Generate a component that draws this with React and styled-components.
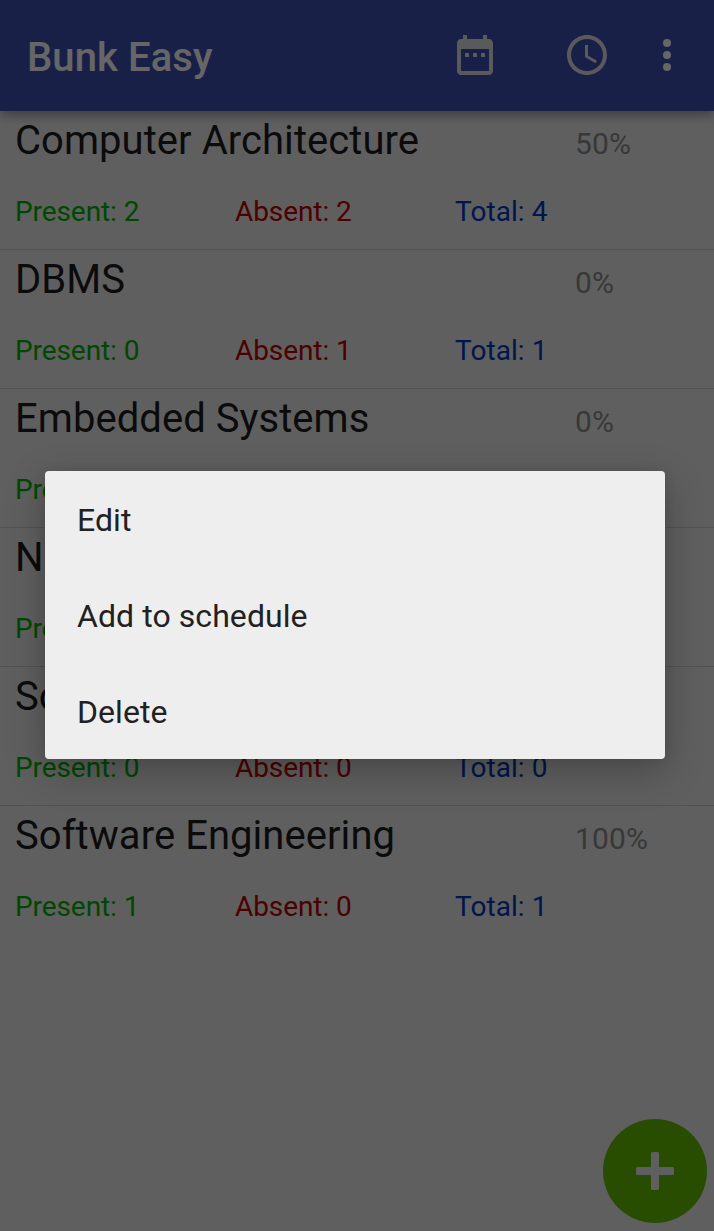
import React from "react";
import styled, { createGlobalStyle } from "styled-components";

const GlobalStyle = createGlobalStyle`
  * { box-sizing: border-box; }
  body {
    margin: 0;
    background: #eeeeee;
    font-family: Roboto, "Liberation Sans", sans-serif;
    overflow: hidden;
  }
`;

const Screen = styled.div`
  position: relative;
  display: flex;
  flex-direction: column;
  width: 714px;
  height: 1231px;
  overflow: hidden;
  background: #eeeeee;
`;

const AppBar = styled.header`
  display: flex;
  align-items: center;
  flex: none;
  height: 111px;
  padding: 0 23px 0 27px;
  background: #3f51b5;
  box-shadow: 0 5px 10px rgba(0, 0, 0, 0.32);
  z-index: 1;
`;

const AppTitle = styled.h1`
  flex: 1;
  margin: 0;
  padding-top: 5px;
  font-size: 40px;
  line-height: 48px;
  font-weight: 500;
  letter-spacing: 0.08px;
  color: #ffffff;
`;

const IconButton = styled.button`
  display: flex;
  flex: none;
  margin: 0 0 1px ${(p) => p.$gap || 0}px;
  padding: 0;
  border: 0;
  background: none;
  color: ${(p) => (p.$strong ? "#ffffff" : "#e0e0e8")};
`;

const SubjectList = styled.ul`
  margin: 0;
  padding: 0;
  list-style: none;
`;

const SubjectRow = styled.li`
  display: flex;
  flex-direction: column;
  height: 139px;
  padding: 0 15px;
  border-bottom: ${(p) => (p.$last ? 0 : 1)}px solid #cdcdcd;
`;

const SubjectHeading = styled.div`
  display: flex;
  align-items: baseline;
  padding-top: 6px;
`;

const SubjectName = styled.span`
  width: 560px;
  font-size: 40px;
  line-height: 48px;
  letter-spacing: 0.05px;
  color: #1d1d1d;
`;

const Percent = styled.span`
  font-size: 30px;
  line-height: 36px;
  letter-spacing: 0.15px;
  color: #8c8c8c;
`;

const Stats = styled.div`
  display: grid;
  grid-template-columns: 220px 220px 220px;
  margin-top: 30px;
`;

const Stat = styled.span`
  font-size: 28px;
  line-height: 33px;
  letter-spacing: ${(p) => p.$tracking || 0}px;
  color: ${(p) => p.$color};
`;

const AddButton = styled.button`
  position: absolute;
  right: 7px;
  bottom: 8px;
  display: flex;
  align-items: center;
  justify-content: center;
  width: 104px;
  height: 104px;
  padding: 0;
  border: 0;
  border-radius: 50%;
  background: #68c000;
  color: #eeeeee;
`;

const Scrim = styled.div`
  position: absolute;
  inset: 0;
  z-index: 2;
  background: rgba(0, 0, 0, 0.6);
`;

const Menu = styled.div`
  position: absolute;
  left: 45px;
  top: 471px;
  z-index: 3;
  width: 620px;
  border-radius: 4px;
  background: #eeeeee;
  box-shadow: 0 12px 38px rgba(0, 0, 0, 0.25), 0 0 12px rgba(0, 0, 0, 0.08);
`;

const MenuItem = styled.div`
  display: flex;
  align-items: center;
  height: 96px;
  padding: 2px 32px 0;
  font-size: 32px;
  line-height: 38px;
  letter-spacing: 0.07px;
  color: #212121;
`;

const subjects = [
  { name: "Computer Architecture", percent: "50%", present: "Present: 2", absent: "Absent: 2", total: "Total: 4" },
  { name: "DBMS", percent: "0%", present: "Present: 0", absent: "Absent: 1", total: "Total: 1" },
  { name: "Embedded Systems", percent: "0%", present: "Pre" },
  { name: "N", present: "Pre" },
  { name: "So", present: "Present: 0", absent: "Absent: 0", total: "Total: 0" },
  { name: "Software Engineering", percent: "100%", present: "Present: 1", absent: "Absent: 0", total: "Total: 1" },
];

const CalendarIcon = () => (
  <svg width="48" height="48" viewBox="0 0 24 24" fill="currentColor">
    <path d="M9 11H7v2h2v-2zm4 0h-2v2h2v-2zm4 0h-2v2h2v-2zm2-7h-1V2h-2v2H8V2H6v2H5c-1.11 0-1.99.9-1.99 2L3 20c0 1.1.89 2 2 2h14c1.1 0 2-.9 2-2V6c0-1.100-.9-2-2-2zm0 16H5V9h14v11z" />
  </svg>
);

const ClockIcon = () => (
  <svg width="48" height="48" viewBox="0 0 24 24" fill="currentColor">
    <path d="M11.990 2C6.470 2 2 6.480 2 12s4.470 10 9.990 10C17.520 22 22 17.520 22 12S17.520 2 11.990 2zM12 20c-4.420 0-8-3.580-8-8s3.580-8 8-8 8 3.580 8 8-3.580 8-8 8zm.5-13H11v6l5.250 3.150.75-1.230-4.500-2.670z" />
  </svg>
);

const MoreIcon = () => (
  <svg width="48" height="48" viewBox="0 0 24 24" fill="currentColor">
    <circle cx="12" cy="6" r="2" />
    <circle cx="12" cy="12" r="2" />
    <circle cx="12" cy="18" r="2" />
  </svg>
);

const PlusIcon = () => (
  <svg width="38" height="38" viewBox="0 0 38 38" fill="currentColor">
    <rect x="15" y="0" width="8" height="38" rx="1.5" />
    <rect x="0" y="15" width="38" height="8" rx="1.5" />
  </svg>
);

export default function App() {
  return (
    <Screen>
      <GlobalStyle />
      <AppBar>
        <AppTitle>Bunk Easy</AppTitle>
        <IconButton aria-label="Calendar"><CalendarIcon /></IconButton>
        <IconButton aria-label="Schedule" $gap={64}><ClockIcon /></IconButton>
        <IconButton aria-label="More options" $gap={32} $strong><MoreIcon /></IconButton>
      </AppBar>
      <SubjectList>
        {subjects.map((s, i) => (
          <SubjectRow key={s.name} $last={i === subjects.length - 1}>
            <SubjectHeading>
              <SubjectName>{s.name}</SubjectName>
              {s.percent && <Percent>{s.percent}</Percent>}
            </SubjectHeading>
            <Stats>
              <Stat $color="#00b400" $tracking={-0.08}>{s.present}</Stat>
              {s.absent && <Stat $color="#c00000" $tracking={-0.08}>{s.absent}</Stat>}
              {s.total && <Stat $color="#0038c0" $tracking={0.06}>{s.total}</Stat>}
            </Stats>
          </SubjectRow>
        ))}
      </SubjectList>
      <AddButton aria-label="Add subject"><PlusIcon /></AddButton>
      <Scrim />
      <Menu>
        <MenuItem>Edit</MenuItem>
        <MenuItem>Add to schedule</MenuItem>
        <MenuItem>Delete</MenuItem>
      </Menu>
    </Screen>
  );
}
